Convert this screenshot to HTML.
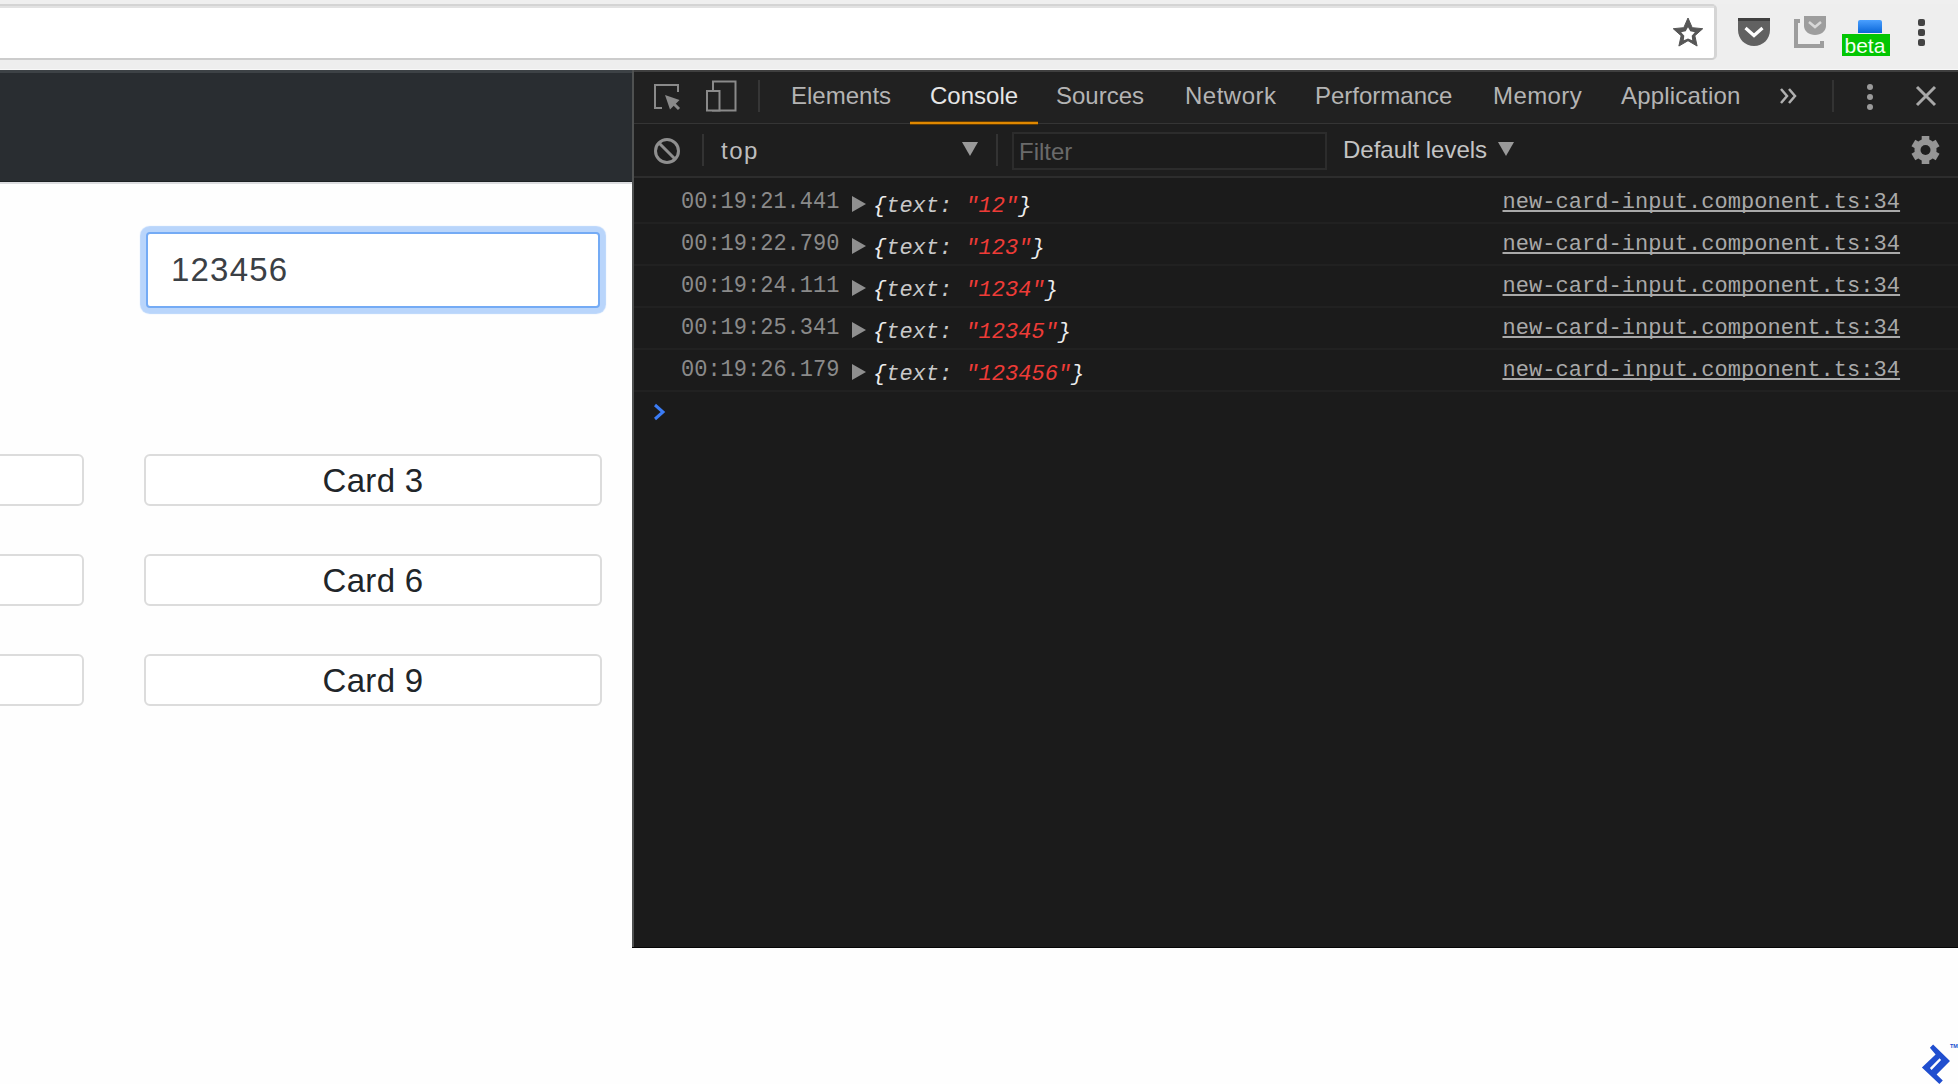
<!DOCTYPE html>
<html><head><meta charset="utf-8">
<style>
*{margin:0;padding:0;box-sizing:border-box}
html,body{width:1958px;height:1084px;overflow:hidden;background:#fefefe;font-family:"Liberation Sans",sans-serif;position:relative}
.a{position:absolute}
.mono{font-family:"Liberation Mono",monospace}
.tab{position:absolute;top:80px;font-size:24px;line-height:32px;color:#b4b4b4;white-space:nowrap}
.row{position:absolute;left:634px;width:1324px;height:42px;border-bottom:2px solid #212121}
.ts{position:absolute;left:681px;font-family:"Liberation Mono",monospace;font-size:22px;color:#8a8a8a;white-space:nowrap;line-height:26px;transform:scaleY(1.12);transform-origin:0 18.9px}
.obj{position:absolute;left:873px;font-family:"Liberation Mono",monospace;font-size:22px;color:#c9c9c9;font-style:italic;white-space:nowrap;line-height:26px}
.obj b{font-weight:normal;color:#ececec}
.obj i{font-style:italic;color:#ee3b37}
.lnk{position:absolute;left:1502.5px;font-family:"Liberation Mono",monospace;font-size:22px;color:#a9a9a9;white-space:nowrap;line-height:26px;text-decoration:underline;text-decoration-thickness:2px;text-underline-offset:2px;text-decoration-skip-ink:none;letter-spacing:0.05px}
.tri{position:absolute;left:852px;width:0;height:0;border-left:14px solid #8f8f8f;border-top:8px solid transparent;border-bottom:8px solid transparent}
.card{position:absolute;height:52px;border:2px solid #dcdcdc;border-radius:6px;background:#fff;font-size:33px;line-height:50px;text-align:center;color:#212529;letter-spacing:0.3px}
</style></head><body>

<!-- browser chrome -->
<div class="a" style="left:0;top:0;width:1958px;height:70px;background:#eeeeee"></div>
<div class="a" style="left:0;top:0;width:1958px;height:4px;background:#efefef"></div>
<div class="a" style="left:-10px;top:4px;width:1727px;height:56px;background:#fff;border-top:2px solid #d4d4d4;border-bottom:2px solid #cccccc;border-right:3px solid #d5d5d5;border-radius:0 5px 5px 0"></div>
<div class="a" style="left:0;top:6px;width:1714px;height:2px;background:#e2e2e2"></div>
<div class="a" style="left:0;top:69px;width:1958px;height:1px;background:#f8f8f8"></div>

<!-- star -->
<svg class="a" style="left:1670px;top:15px" width="36" height="34" viewBox="0 0 36 34">
<polygon points="18.00,3.00 22.23,12.68 32.74,13.71 24.85,20.72 27.11,31.04 18.00,25.70 8.89,31.04 11.15,20.72 3.26,13.71 13.77,12.68" fill="#565656" stroke="#565656" stroke-width="1" stroke-linejoin="round"/>
<polygon points="18.00,12.30 20.29,16.34 24.85,17.28 21.71,20.71 22.23,25.32 18.00,23.40 13.77,25.32 14.29,20.71 11.15,17.28 15.71,16.34" fill="#fff"/>
</svg>
<!-- pocket -->
<svg class="a" style="left:1736px;top:16px" width="36" height="32" viewBox="0 0 36 32">
<path d="M2,2 H34 V14 C34,23 27,30 18,30 C9,30 2,23 2,14 Z" fill="#616161"/>
<rect x="2" y="2" width="32" height="3" fill="#404040"/>
<path d="M9.5,12 L18,19.5 L26.5,12" fill="none" stroke="#fff" stroke-width="3.2"/>
</svg>
<!-- second ext -->
<svg class="a" style="left:1792px;top:14px" width="38" height="36" viewBox="0 0 38 36">
<path d="M8,7 H4 V32 H30 V27" fill="none" stroke="#9d9d9d" stroke-width="4"/>
<path d="M12,2 H34 V12 C34,17 29,21 23,21 C17,21 12,17 12,12 Z" fill="#9d9d9d"/>
<path d="M17,8 L23,13 L29,8" fill="none" stroke="#d8d8d8" stroke-width="2.5"/>
</svg>
<!-- beta -->
<div class="a" style="left:1858px;top:20px;width:24px;height:13px;background:linear-gradient(#4aa0ff,#0a66d8);border-radius:2px 2px 0 0"></div>
<div class="a" style="left:1842px;top:34px;width:48px;height:22px;background:#03c603"></div>
<div class="a" style="left:1844.5px;top:34px;font-size:21px;line-height:24px;color:#f4fff4;letter-spacing:0">beta</div>
<!-- kebab -->
<div class="a" style="left:1918px;top:19px;width:7px;height:7px;background:#444;border-radius:2px"></div>
<div class="a" style="left:1918px;top:29px;width:7px;height:7px;background:#444;border-radius:2px"></div>
<div class="a" style="left:1918px;top:39px;width:7px;height:7px;background:#444;border-radius:2px"></div>

<!-- page -->
<div class="a" style="left:0;top:70px;width:632px;height:111px;background:#292d31;border-top:3px solid #3d4246"></div>
<div class="a" style="left:0;top:181px;width:632px;height:1px;background:#1c2023"></div>
<div class="a" style="left:0;top:182px;width:632px;height:2px;background:#dcdde0"></div>

<div class="a" style="left:146px;top:232px;width:454px;height:76px;border:2.5px solid #74abf5;border-radius:4px;box-shadow:0 0 1px 6px #b9d5fb;background:#fff"></div>
<div class="a" style="left:171px;top:251px;font-size:33px;line-height:38px;color:#3b4045;letter-spacing:1.2px">123456</div>

<div class="card" style="left:-400px;top:454px;width:484px"></div>
<div class="card" style="left:144px;top:454px;width:458px">Card 3</div>
<div class="card" style="left:-400px;top:554px;width:484px"></div>
<div class="card" style="left:144px;top:554px;width:458px">Card 6</div>
<div class="card" style="left:-400px;top:654px;width:484px"></div>
<div class="card" style="left:144px;top:654px;width:458px">Card 9</div>

<!-- devtools -->
<div class="a" style="left:632px;top:70px;width:1326px;height:878px;background:#1b1b1b"></div>
<div class="a" style="left:632px;top:70px;width:2px;height:878px;background:#4f5151"></div>
<div class="a" style="left:634px;top:70px;width:1324px;height:53px;background:#212121;border-top:2px solid #3f3f3f"></div>
<div class="a" style="left:634px;top:123px;width:1324px;height:1px;background:#353535"></div>
<div class="a" style="left:634px;top:124px;width:1324px;height:52px;background:#1e1e1e"></div>
<div class="a" style="left:634px;top:176px;width:1324px;height:2px;background:#2d2d2d"></div>
<div class="a" style="left:632px;top:947px;width:1326px;height:1px;background:#050505"></div>

<!-- toolbar icons -->
<svg class="a" style="left:650px;top:80px" width="36" height="36" viewBox="0 0 36 36">
<path d="M12,28 H5 V5 H28 V12" fill="none" stroke="#8a8a8a" stroke-width="2"/>
<path d="M15,15 L29.5,20 L20,29.5 Z" fill="#8a8a8a"/>
<path d="M22,22 L29,29" stroke="#8a8a8a" stroke-width="3"/>
</svg>
<svg class="a" style="left:704px;top:78px" width="36" height="36" viewBox="0 0 36 36">
<rect x="9" y="3.5" width="22.5" height="29" fill="none" stroke="#8a8a8a" stroke-width="2"/>
<rect x="3" y="13" width="12.5" height="19.5" fill="#212121" stroke="#8a8a8a" stroke-width="2"/>
</svg>
<div class="a" style="left:758px;top:80px;width:2px;height:32px;background:#363636"></div>

<div class="tab" style="left:791px">Elements</div>
<div class="tab" style="left:930px;color:#e6e6e6">Console</div>
<div class="tab" style="left:1056px">Sources</div>
<div class="tab" style="left:1185px;letter-spacing:0.5px">Network</div>
<div class="tab" style="left:1315px">Performance</div>
<div class="tab" style="left:1493px;letter-spacing:0.4px">Memory</div>
<div class="tab" style="left:1621px;letter-spacing:0.2px">Application</div>
<div class="a" style="left:910px;top:121px;width:128px;height:4px;background:#5a3a08"></div><div class="a" style="left:910px;top:122px;width:128px;height:2px;background:#e08800"></div>

<svg class="a" style="left:1778px;top:86px" width="22" height="20" viewBox="0 0 22 20">
<path d="M3,3 L9,10 L3,17 M11,3 L17,10 L11,17" fill="none" stroke="#b0b0b0" stroke-width="2.5"/>
</svg>
<div class="a" style="left:1832px;top:80px;width:2px;height:32px;background:#333"></div>
<div class="a" style="left:1867px;top:84px;width:6px;height:6px;background:#9a9a9a;border-radius:50%"></div>
<div class="a" style="left:1867px;top:94px;width:6px;height:6px;background:#9a9a9a;border-radius:50%"></div>
<div class="a" style="left:1867px;top:104px;width:6px;height:6px;background:#9a9a9a;border-radius:50%"></div>
<svg class="a" style="left:1914px;top:84px" width="24" height="24" viewBox="0 0 24 24">
<path d="M3,3 L21,21 M21,3 L3,21" stroke="#a8a8a8" stroke-width="3"/>
</svg>

<!-- console toolbar -->
<svg class="a" style="left:652px;top:136px" width="30" height="30" viewBox="0 0 30 30">
<circle cx="15" cy="15" r="11.5" fill="none" stroke="#8f8f8f" stroke-width="3"/>
<path d="M7,7 L23,23" stroke="#8f8f8f" stroke-width="3"/>
</svg>
<div class="a" style="left:702px;top:134px;width:2px;height:32px;background:#333"></div>
<div class="a" style="left:721px;top:135px;font-size:24px;line-height:32px;color:#bdbdbd;letter-spacing:1.5px">top</div>
<div class="a" style="left:962px;top:142px;width:0;height:0;border-top:14px solid #9a9a9a;border-left:8px solid transparent;border-right:8px solid transparent"></div>
<div class="a" style="left:996px;top:134px;width:2px;height:32px;background:#333"></div>
<div class="a" style="left:1012px;top:132px;width:315px;height:38px;border:2px solid #2c2c2c;background:#1c1c1c"></div>
<div class="a" style="left:1019px;top:136px;font-size:24px;line-height:32px;color:#6a6a6a">Filter</div>
<div class="a" style="left:1343px;top:134px;font-size:24px;line-height:32px;color:#c4c4c4">Default levels</div>
<div class="a" style="left:1498px;top:142px;width:0;height:0;border-top:14px solid #9a9a9a;border-left:8px solid transparent;border-right:8px solid transparent"></div>
<svg class="a" style="left:1910px;top:135px" width="31" height="31" viewBox="0 0 31 31">
<g fill="#959595" transform="translate(15.5,15)">
<circle r="11"/>
<rect x="-3.8" y="-14" width="7.6" height="28"/>
<rect x="-3.8" y="-14" width="7.6" height="28" transform="rotate(60)"/>
<rect x="-3.8" y="-14" width="7.6" height="28" transform="rotate(120)"/>
</g>
<circle cx="15.5" cy="15" r="5" fill="#1e1e1e"/>
</svg>

<!-- log rows -->
<div class="row" style="top:182px"></div>
<div class="row" style="top:224px"></div>
<div class="row" style="top:266px"></div>
<div class="row" style="top:308px"></div>
<div class="row" style="top:350px"></div>

<div class="ts" style="top:190px">00:19:21.441</div>
<div class="tri" style="top:196px"></div>
<div class="obj" style="top:194px"><b>{</b>text: <i>"12"</i><b>}</b></div>
<div class="lnk" style="top:190px">new-card-input.component.ts:34</div>

<div class="ts" style="top:232px">00:19:22.790</div>
<div class="tri" style="top:238px"></div>
<div class="obj" style="top:236px"><b>{</b>text: <i>"123"</i><b>}</b></div>
<div class="lnk" style="top:232px">new-card-input.component.ts:34</div>

<div class="ts" style="top:274px">00:19:24.111</div>
<div class="tri" style="top:280px"></div>
<div class="obj" style="top:278px"><b>{</b>text: <i>"1234"</i><b>}</b></div>
<div class="lnk" style="top:274px">new-card-input.component.ts:34</div>

<div class="ts" style="top:316px">00:19:25.341</div>
<div class="tri" style="top:322px"></div>
<div class="obj" style="top:320px"><b>{</b>text: <i>"12345"</i><b>}</b></div>
<div class="lnk" style="top:316px">new-card-input.component.ts:34</div>

<div class="ts" style="top:358px">00:19:26.179</div>
<div class="tri" style="top:364px"></div>
<div class="obj" style="top:362px"><b>{</b>text: <i>"123456"</i><b>}</b></div>
<div class="lnk" style="top:358px">new-card-input.component.ts:34</div>

<svg class="a" style="left:652px;top:402px" width="16" height="20" viewBox="0 0 16 20">
<path d="M3,3 L11,10 L3,17" fill="none" stroke="#3b7cf5" stroke-width="3"/>
</svg>

<!-- toptal logo -->
<svg class="a" style="left:1900px;top:1030px" width="58" height="54" viewBox="0 0 58 54">
<path d="M33.1,14.4 L50,30.9 L36.6,44.6 L42.8,50.6 L39.4,54 L21.9,37.4 L35.6,24.4 L29.9,17.7 Z M39.6,28.2 L41.1,30.1 L31.6,39.9 L29.9,37.9 Z" fill="#204ecf" fill-rule="evenodd"/>
<text x="50" y="18" font-size="5.5" font-weight="bold" fill="#204ecf" font-family="Liberation Sans">TM</text>
</svg>

</body></html>
